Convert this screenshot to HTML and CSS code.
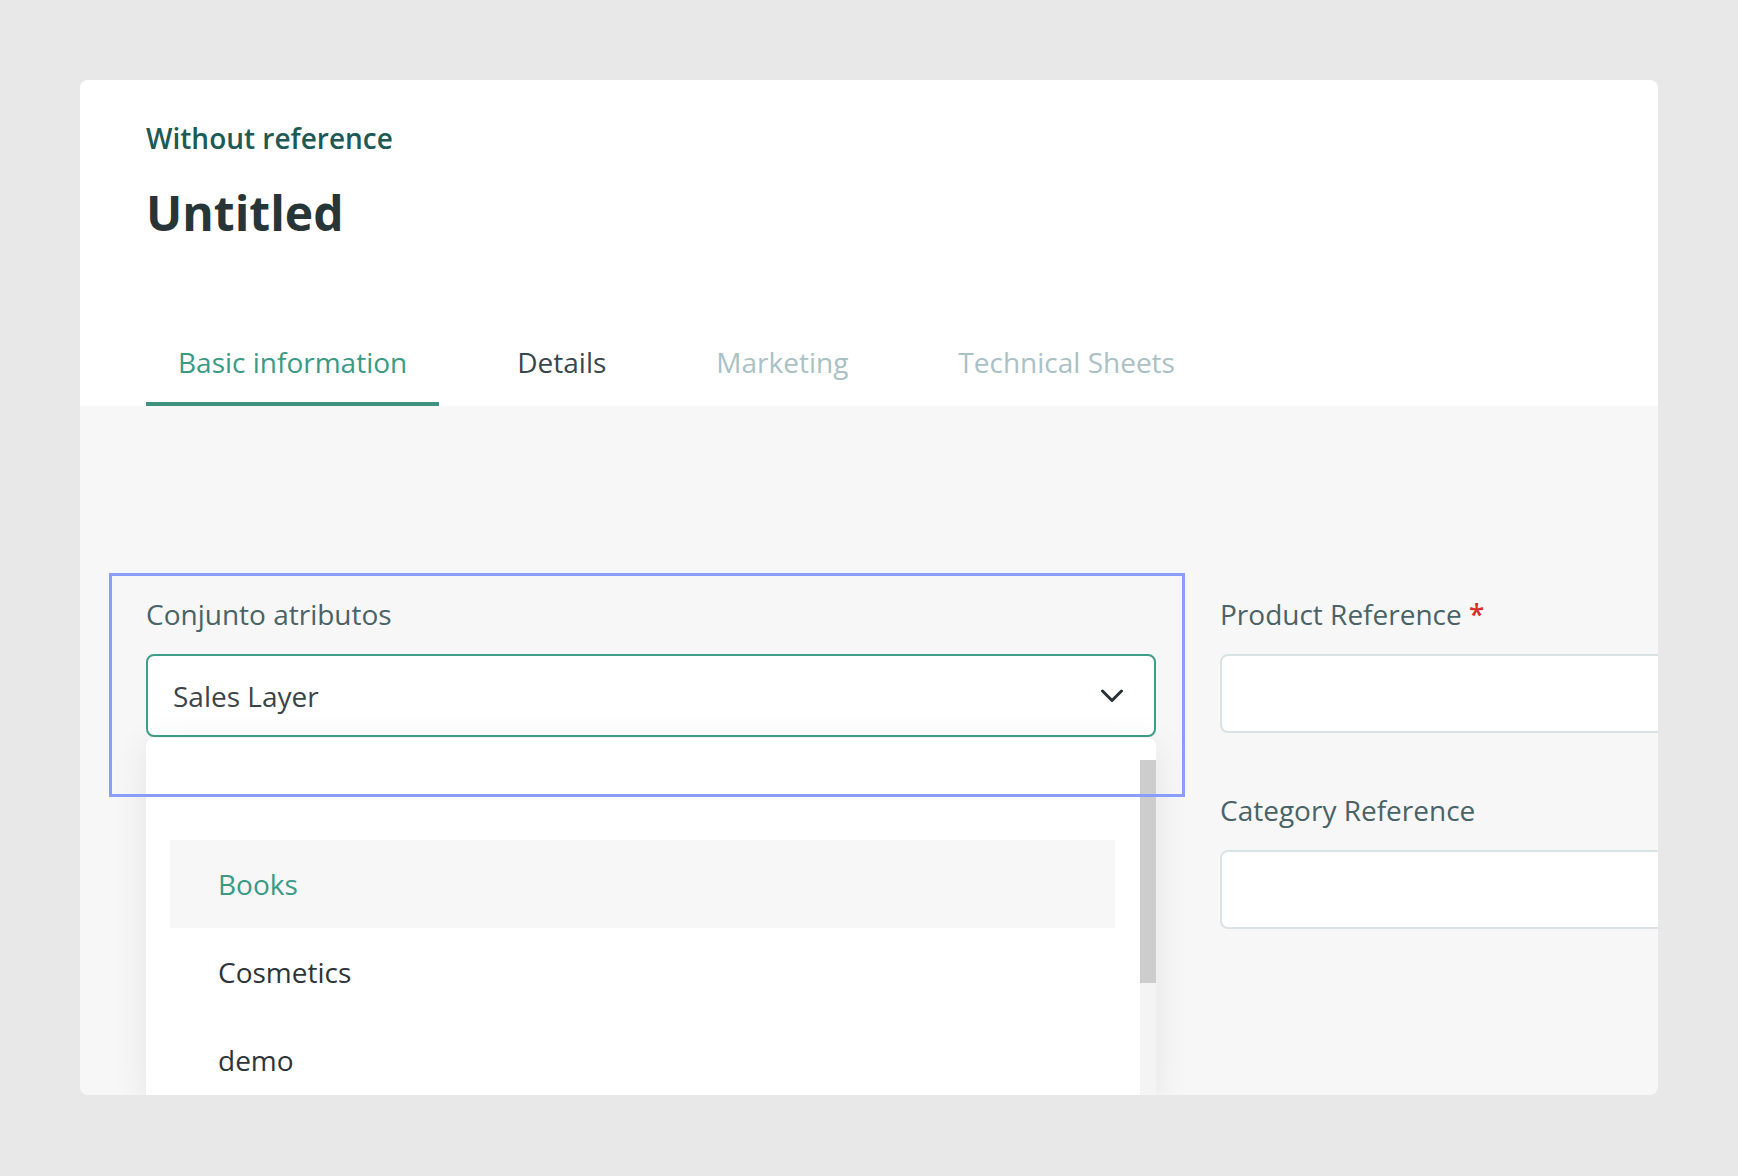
FILE: index.html
```html
<!DOCTYPE html>
<html lang="en">
<head>
    <meta charset="UTF-8">
    <title>Untitled - Basic information</title>
    <link rel="stylesheet" href="styles.css">
</head>
<body>
<div class="card">
    <!-- header -->
    <div class="card-header">
        <div class="eyebrow">Without reference</div>
        <h1 class="title">Untitled</h1>
        <div class="tabs">
            <span class="tab active">Basic information</span>
            <span class="tab">Details</span>
            <span class="tab disabled">Marketing</span>
            <span class="tab disabled">Technical Sheets</span>
        </div>
    </div>

    <!-- form -->
    <div class="card-body">
        <div class="field field-select">
            <label>Conjunto atributos</label>
            <div class="select-wrap">
                <div class="select">
                    <span>Sales Layer</span>
                    <svg class="chevron" width="24" height="14" viewBox="0 0 24 14">
                        <path d="M2.5 2 L12 11.5 L21.5 2" fill="none" stroke="#2b3033" stroke-width="3" stroke-linecap="round" stroke-linejoin="round"/>
                    </svg>
                </div>
                <div class="dropdown">
                    <div class="option active">Books</div>
                    <div class="option">Cosmetics</div>
                    <div class="option">demo</div>
                    <div class="scrollbar"><div class="thumb"></div></div>
                </div>
            </div>
            <div class="highlight"></div>
        </div>

        <div class="column">
            <div class="field">
                <label>Product Reference <span class="required">*</span></label>
                <input type="text" class="input">
            </div>
            <div class="field field-next">
                <label>Category Reference</label>
                <input type="text" class="input">
            </div>
        </div>
    </div>
</div>
</body>
</html>
```

FILE: styles.css
```css
body {
    font-family: "Open Sans", "Liberation Sans", sans-serif;
    background-color: #e8e8e8;
    margin: 0;
    padding: 80px;
}

/* card */
.card {
    height: 1015px;
    background-color: #f7f7f7;
    border-radius: 8px;
    overflow: hidden;
}

/* header */
.card-header {
    background-color: #ffffff;
    padding: 39px 66px 0;
}
.eyebrow {
    font-size: 28px;
    line-height: 38px;
    font-weight: 600;
    color: #1e5a55;
}
.title {
    margin: 26px 0 0;
    font-size: 48px;
    line-height: 60px;
    font-weight: 700;
    color: #283538;
}
.tabs {
    display: flex;
    gap: 46px;
    margin-top: 100px;
}
.tab {
    padding: 0 32px 21px;
    font-size: 28px;
    line-height: 38px;
    color: #37474c;
    border-bottom: 4px solid transparent;
}
.tab.active {
    color: #3b9a84;
    border-bottom-color: #3d937f;
}
.tab.disabled {
    color: #aac1c4;
}

/* body */
.card-body {
    display: grid;
    grid-template-columns: 1010px 1010px;
    column-gap: 64px;
    padding: 189px 0 0 66px;
}
.field {
    position: relative;
}
.field label {
    display: block;
    margin-bottom: 21px;
    font-size: 28px;
    line-height: 38px;
    color: #4a6367;
}
.field .required {
    color: #d9302c;
    font-weight: 600;
}
.field-next {
    margin-top: 58px;
}
.input {
    display: block;
    box-sizing: border-box;
    width: 100%;
    height: 79px;
    margin: 0;
    background-color: #ffffff;
    border: 2px solid #d9e2e4;
    border-radius: 8px;
}

/* select */
.select-wrap {
    position: relative;
}
.select {
    box-sizing: border-box;
    height: 83px;
    display: flex;
    align-items: center;
    justify-content: space-between;
    padding: 0 30px 0 25px;
    background-color: #ffffff;
    border: 2px solid #3f9e88;
    border-radius: 8px;
    font-size: 28px;
    line-height: 38px;
    color: #3b4446;
}
.chevron {
    display: block;
}
.dropdown {
    position: absolute;
    top: 84px;
    left: 0;
    right: 0;
    height: 360px;
    z-index: 2;
    box-sizing: border-box;
    padding: 102px 41px 0 24px;
    background-color: #ffffff;
    border-radius: 8px 8px 0 0;
    box-shadow: 0 6px 36px rgba(0, 0, 0, 0.08);
}
.option {
    height: 88px;
    padding-left: 48px;
    font-size: 28px;
    line-height: 88px;
    color: #2e3537;
}
.option.active {
    background-color: #f7f7f7;
    color: #3b9a84;
}
.scrollbar {
    position: absolute;
    top: 22px;
    right: 0;
    bottom: 0;
    width: 16px;
    background-color: #f4f4f4;
}
.scrollbar .thumb {
    height: 223px;
    background-color: #cdcdcd;
}

/* selection outline */
.highlight {
    position: absolute;
    top: -22px;
    left: -37px;
    width: 1076px;
    height: 224px;
    box-sizing: border-box;
    border: 3px solid #8a9dff;
    z-index: 3;
    pointer-events: none;
}
```
